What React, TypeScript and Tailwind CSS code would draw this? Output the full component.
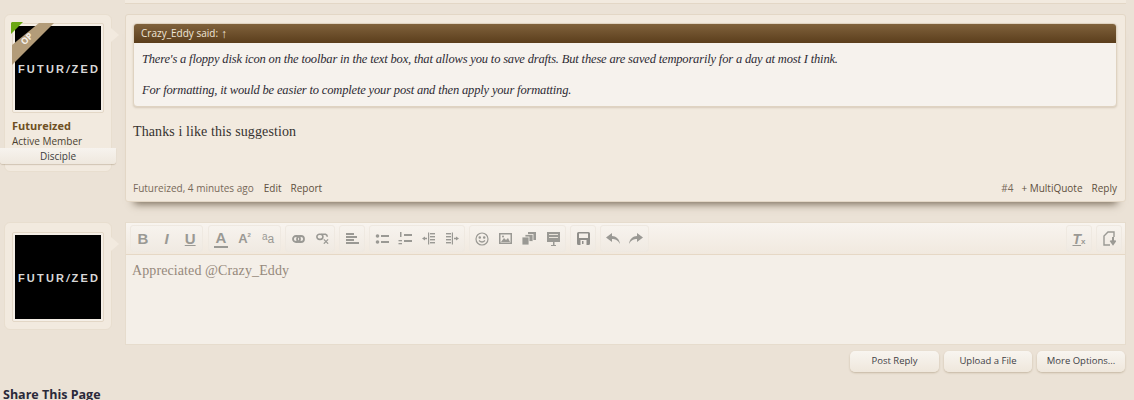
import React from 'react';

const ui = "font-['Open_Sans','Noto_Sans',sans-serif]";
const gray = '#9a9994';

const ToolButton = ({ children }: { children: React.ReactNode }) => (
    <div className="w-[24px] h-[27px] flex items-center justify-center text-[#9a9994]">
        {children}
    </div>
);

const ToolGroup = ({ children, className = '' }: { children: React.ReactNode; className?: string }) => (
    <div className={`flex items-center justify-around h-[27px] rounded-[3px] border border-[#efe9e1] bg-gradient-to-b from-[#f7f3ee] to-[#f0eae2] ${className}`}>
        {children}
    </div>
);

const Letter = ({ children, className = '' }: { children: React.ReactNode; className?: string }) => (
    <span className={`font-['Liberation_Sans',sans-serif] leading-none ${className}`}>{children}</span>
);

const ListBullets = () => (
    <svg width="14" height="12" viewBox="0 0 14 12" fill={gray}>
        <circle cx="2.5" cy="3" r="1.8" />
        <circle cx="2.5" cy="9" r="1.8" />
        <rect x="6" y="2" width="8" height="2" />
        <rect x="6" y="8" width="8" height="2" />
    </svg>
);

const ListNumbers = () => (
    <svg width="14" height="13" viewBox="0 0 14 13" fill={gray}>
        <rect x="2" y="0" width="1.5" height="5" />
        <rect x="0.5" y="8" width="3.5" height="1.3" />
        <rect x="0.5" y="11" width="3.5" height="1.3" />
        <rect x="6" y="2" width="8" height="2" />
        <rect x="6" y="8" width="8" height="2" />
    </svg>
);

const Outdent = ({ flip }: { flip?: boolean }) => (
    <svg width="13" height="13" viewBox="0 0 13 13" fill={gray} style={flip ? { transform: 'scaleX(-1)' } : undefined}>
        <rect x="6" y="0.5" width="1.2" height="12" />
        <rect x="8" y="1" width="5" height="1.4" />
        <rect x="8" y="4" width="5" height="1.4" />
        <rect x="8" y="7" width="5" height="1.4" />
        <rect x="8" y="10" width="5" height="1.4" />
        <path d="M0 6.5 L3 4.5 V5.8 H5 V7.2 H3 V8.5 Z" />
    </svg>
);

const Toolbar = () => (
    <div className="h-[32px] shrink-0 flex items-center pl-[4px] pr-[3px] border-b border-[#e6d8c5] bg-gradient-to-b from-[#f8f4ef] to-[#f1e9df]">
        <ToolGroup className="w-[73px]">
            <ToolButton><Letter className="text-[15px] font-bold">B</Letter></ToolButton>
            <ToolButton><Letter className="text-[15px] font-bold italic">I</Letter></ToolButton>
            <ToolButton><Letter className="text-[15px] font-bold underline">U</Letter></ToolButton>
        </ToolGroup>
        <ToolGroup className="w-[73px] ml-[5px]">
            <ToolButton>
                <div className="flex flex-col items-center">
                    <Letter className="text-[15px] font-bold">A</Letter>
                    <div className="w-[14px] h-[2px] bg-[#9a9994] mt-[1px]" />
                </div>
            </ToolButton>
            <ToolButton><Letter className="text-[13px] font-bold">A<span className="text-[6px] align-top">2</span></Letter></ToolButton>
            <ToolButton><Letter className="text-[10px]"><span className="align-[3px]">a</span><span className="text-[12px]">a</span></Letter></ToolButton>
        </ToolGroup>
        <ToolGroup className="w-[50px] ml-[4px]">
            <ToolButton>
                <svg width="13" height="8" viewBox="0 0 13 8" fill="none" stroke={gray} strokeWidth="1.8">
                    <rect x="1" y="1" width="7" height="6" rx="3" />
                    <rect x="5" y="1" width="7" height="6" rx="3" />
                </svg>
            </ToolButton>
            <ToolButton>
                <svg width="13" height="11" viewBox="0 0 15 12" fill="none" stroke={gray} strokeWidth="1.8">
                    <rect x="1" y="1" width="7" height="6" rx="3" />
                    <path d="M6 1 H11 A3 3 0 0 1 13 4" />
                    <path d="M9 7 L14 12 M14 7 L9 12" strokeWidth="1.4" />
                </svg>
            </ToolButton>
        </ToolGroup>
        <ToolGroup className="w-[26px] ml-[4px]">
            <svg width="13" height="11" viewBox="0 0 13 11" fill={gray}>
                <rect x="0" y="0" width="8" height="2" />
                <rect x="0" y="3" width="11" height="2" />
                <rect x="0" y="6" width="8" height="2" />
                <rect x="0" y="9" width="13" height="2" />
            </svg>
        </ToolGroup>
        <ToolGroup className="w-[96px] ml-[4px]">
            <ToolButton><ListBullets /></ToolButton>
            <ToolButton><ListNumbers /></ToolButton>
            <ToolButton><Outdent /></ToolButton>
            <ToolButton><Outdent flip /></ToolButton>
        </ToolGroup>
        <ToolGroup className="w-[97px] ml-[4px]">
            <ToolButton>
                <svg width="14" height="14" viewBox="0 0 14 14" fill="none" stroke={gray} strokeWidth="1.2">
                    <circle cx="7" cy="7" r="6" />
                    <circle cx="4.8" cy="5.5" r="0.7" fill={gray} />
                    <circle cx="9.2" cy="5.5" r="0.7" fill={gray} />
                    <path d="M4 8.5 Q7 11.5 10 8.5" />
                </svg>
            </ToolButton>
            <ToolButton>
                <svg width="13" height="11" viewBox="0 0 13 11" fill={gray}>
                    <path fillRule="evenodd" d="M0 0 H13 V11 H0 Z M1.5 1.5 V9.5 H11.5 V1.5 Z" />
                    <path d="M2 9 L5 5 L7 7 L9 5 L11 9 Z" />
                    <circle cx="4" cy="3.5" r="1" />
                </svg>
            </ToolButton>
            <ToolButton>
                <svg width="14" height="13" viewBox="0 0 14 13" fill={gray}>
                    <rect x="6" y="0" width="8" height="8" />
                    <rect x="3" y="2.5" width="8" height="7" stroke="#f4efe8" strokeWidth="0.8" />
                    <rect x="0" y="5" width="7" height="8" stroke="#f4efe8" strokeWidth="0.8" />
                </svg>
            </ToolButton>
            <ToolButton>
                <svg width="13" height="14" viewBox="0 0 13 14" fill={gray}>
                    <rect x="0" y="0" width="13" height="10" />
                    <rect x="2" y="2" width="9" height="1" fill="#e8e3da" />
                    <rect x="2" y="5" width="9" height="1" fill="#e8e3da" />
                    <rect x="6" y="10" width="1.5" height="3" />
                    <rect x="4" y="13" width="5" height="1" />
                </svg>
            </ToolButton>
        </ToolGroup>
        <ToolGroup className="w-[26px] ml-[4px]">
            <svg width="13" height="13" viewBox="0 0 13 13" fill="#8f8e8a">
                <path fillRule="evenodd" d="M1.5 0 H11.5 A1.5 1.5 0 0 1 13 1.5 V11.5 A1.5 1.5 0 0 1 11.5 13 H1.5 A1.5 1.5 0 0 1 0 11.5 V1.5 A1.5 1.5 0 0 1 1.5 0 Z M2 1.5 V6 H11 V1.5 Z M3.5 8 V13 H9.5 V8 Z" />
                <rect x="5" y="9" width="1.5" height="3" />
            </svg>
        </ToolGroup>
        <ToolGroup className="w-[49px] ml-[4px]">
            <ToolButton>
                <svg width="14" height="11" viewBox="0 0 14 11" fill={gray}>
                    <path d="M6 0 L0 4.5 L6 9 V6 C9 6 12 7 14 11 C13.5 6 10 3 6 3 Z" />
                </svg>
            </ToolButton>
            <ToolButton>
                <svg width="14" height="11" viewBox="0 0 14 11" fill={gray}>
                    <path d="M8 0 L14 4.5 L8 9 V6 C5 6 2 7 0 11 C0.5 6 4 3 8 3 Z" />
                </svg>
            </ToolButton>
        </ToolGroup>
        <div className="flex-1" />
        <ToolGroup className="w-[26px]">
            <ToolButton>
                <Letter className="text-[14px] font-bold italic">
                    <span className="underline">T</span>
                    <span className="text-[8px] not-italic">x</span>
                </Letter>
            </ToolButton>
        </ToolGroup>
        <ToolGroup className="w-[26px] ml-[4px]">
            <svg width="13" height="15" viewBox="0 0 13 15" fill="none" stroke={gray} strokeWidth="1.4">
                <path d="M7 14 H1 V5 L5 1 H11 V6" />
                <path d="M10 6 V11 M7.5 9.5 L10 13 L12.5 9.5" strokeWidth="2" />
            </svg>
        </ToolGroup>
    </div>
);

const Avatar = () => (
    <div className="w-[92px] h-[90px] p-[2px] rounded-[2px] bg-[#f5efe7] border border-[#e3d7c6]">
        <div className="w-full h-full bg-black flex items-center justify-center pt-[2px]">
            <span className="font-['Liberation_Sans',sans-serif] font-bold text-[11px] tracking-[2.2px] text-[#d8d8d8] pl-[2px]">
                FUTUR<span className="italic">/</span>ZED
            </span>
        </div>
    </div>
);

const Notch = ({ className }: { className: string }) => (
    <svg width="9" height="14" viewBox="0 0 9 14" className={`absolute left-[106px] ${className}`}>
        <path d="M0 0 L8 7 L0 14 Z" fill="#f2eadf" />
    </svg>
);

const FooterLink = ({ children, className = '' }: { children: React.ReactNode; className?: string }) => (
    <span className={`text-[#5f5040] ${className}`}>{children}</span>
);

const ActionButton = ({ label, className = 'w-[88px]' }: { label: string; className?: string }) => (
    <div className={`h-[21px] flex items-center justify-center rounded-[5px] text-[9.5px] text-[#3f3f46] bg-gradient-to-b from-[#f8f5f0] to-[#efe7dc] shadow-[0_1px_2px_rgba(150,130,100,0.45)] ${className}`}>
        {label}
    </div>
);

export default function App() {
    return (
        <div className={`relative w-[1134px] h-[400px] overflow-hidden bg-[#ebe2d6] ${ui}`}>
            {/* bottom of the previous post */}
            <div className="ml-[125px] w-[1001px] h-[4px] bg-[#f2eadf] border-b border-[#e3d7c6] shadow-[0_11px_8px_-9px_rgba(80,65,45,0.75)]" />

            <div className="flex mt-[10px] pl-[4px]">
                <div className="relative w-[108px] h-[158px] shrink-0 rounded-[6px] bg-[#f2eadf] border border-[#e8decf] pt-[8px] pl-[7px]">
                    <Avatar />
                    <Notch className="top-[13px]" />
                    <svg width="43" height="43" viewBox="0 0 43 43" className="absolute left-[6px] top-[7px]">
                        <path d="M1 0 H12 L0 12 V1 Z" fill="#6ba713" />
                        <path d="M28 1 H43 L1 43 V23 Z" fill="#b39c79" />
                        <text x="0" y="0" textAnchor="middle" transform="translate(18 19) rotate(-45)" fontSize="9" fontWeight="700" fill="#f4efe8" fontFamily="Open Sans">OP</text>
                    </svg>
                    <div className="mt-[6px] text-[11px] font-bold leading-[14px] text-[#6e4f22]">Futureized</div>
                    <div className="mt-[1px] text-[10px] leading-[14px] text-[#4a3f30]">Active Member</div>
                    <div className="w-[116px] h-[16px] -ml-[12px] flex items-center justify-center text-[10px] text-[#3d3d3d] rounded-b-[3px] bg-gradient-to-b from-[#f7f3ee] to-[#efe8de] shadow-[0_1px_1px_rgba(150,130,100,0.35)]">
                        Disciple
                    </div>
                </div>

                <div className="w-[1001px] h-[188px] ml-[13px] flex flex-col rounded-[3px] bg-[#f2eadf] border border-[#e3d7c6] shadow-[0_11px_8px_-9px_rgba(80,65,45,0.75)] pl-[7px] pr-[8px] pt-[8px]">
                    <div className="rounded-[4px] border border-[#dfd3c1] bg-[#f6f2ed] shadow-[0_1px_2px_rgba(150,130,100,0.3)] overflow-hidden">
                        <div className="h-[19px] flex items-center pl-[7px] text-[10px] text-[#efe6d8] bg-gradient-to-b from-[#80623c] to-[#5b3e1c]">
                            Crazy_Eddy said:<span className="ml-[3px] text-[12px] leading-none">↑</span>
                        </div>
                        <div className="h-[63px] pl-[8px] pt-[9px] font-['Liberation_Serif',serif] italic text-[12.5px] tracking-[-0.165px] leading-[15px] text-[#2d2a33]">
                            <div>There's a floppy disk icon on the toolbar in the text box, that allows you to save drafts. But these are saved temporarily for a day at most I think.</div>
                            <div className="mt-[16px]">For formatting, it would be easier to complete your post and then apply your formatting.</div>
                        </div>
                    </div>
                    <div className="mt-[17px] font-['Liberation_Serif',serif] text-[14px] tracking-[0.1px] leading-[16px] text-[#36322f]">
                        Thanks i like this suggestion
                    </div>
                    <div className="mt-auto mb-[6px] flex items-center justify-between text-[10px] leading-[14px]">
                        <div className="text-[#77695a]">
                            Futureized, 4 minutes ago
                            <FooterLink className="ml-[10px]">Edit</FooterLink>
                            <FooterLink className="ml-[9px]">Report</FooterLink>
                        </div>
                        <div className="text-[#77695a]">
                            #4
                            <FooterLink className="ml-[8px]">+ MultiQuote</FooterLink>
                            <FooterLink className="ml-[9px]">Reply</FooterLink>
                        </div>
                    </div>
                </div>
            </div>

            <div className="flex mt-[20px] pl-[4px]">
                <div className="relative w-[108px] h-[108px] shrink-0 rounded-[6px] bg-[#f2eadf] border border-[#e8decf] pt-[9px] pl-[7px]">
                    <Avatar />
                    <Notch className="top-[14px]" />
                </div>
                <div className="w-[1001px] h-[123px] ml-[13px] flex flex-col bg-[#f4efe8] border border-[#e6dccd]">
                    <Toolbar />
                    <div className="pl-[6px] pt-[8px] font-['Liberation_Serif',serif] text-[14px] tracking-[0.1px] leading-[16px] text-[#96897c]">
                        Appreciated @Crazy_Eddy
                    </div>
                </div>
            </div>

            <div className="flex justify-end gap-[5px] mt-[6px] pr-[9px]">
                <ActionButton label="Post Reply" className="w-[89px]" />
                <ActionButton label="Upload a File" />
                <ActionButton label="More Options..." />
            </div>

            <div className="mt-[15px] pl-[3px] text-[12.5px] font-bold leading-[16px] text-[#2a2a3a]">Share This Page</div>
        </div>
    );
}
